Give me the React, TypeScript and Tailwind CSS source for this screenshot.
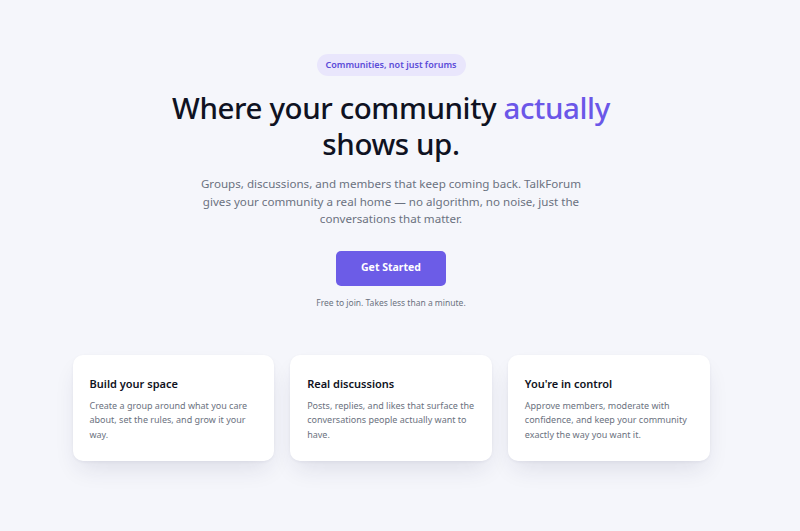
const features = [
  {
    title: "Build your space",
    body: "Create a group around what you care about, set the rules, and grow it your way.",
  },
  {
    title: "Real discussions",
    body: "Posts, replies, and likes that surface the conversations people actually want to have.",
  },
  {
    title: "You're in control",
    body: "Approve members, moderate with confidence, and keep your community exactly the way you want it.",
  },
];

export default function App() {
  return (
    <div className="min-h-screen w-full bg-[#f5f6fb] pr-[18px] font-['Noto_Sans',sans-serif]">
      <section className="flex flex-col items-center pt-[54px] px-4">
        {/* Badge */}
        <span className="rounded-full bg-[#e9e6fc] px-[9px] h-[22px] flex items-center text-[9px] font-semibold text-[#5b4bd8]">
          Communities, not just forums
        </span>

        {/* Heading */}
        <h1 className="mt-[14px] text-center text-[29.5px] leading-[36px] font-medium text-[#0f1222] tracking-[-0.4px]">
          Where your community <span className="text-[#6b57e8]">actually</span>
          <br />
          shows up.
        </h1>

        <p className="mt-[13px] max-w-[384px] text-center text-[11.6px] leading-[17.5px] text-[#6b7280]">
          Groups, discussions, and members that keep coming back. TalkForum gives your community a real home — no
          algorithm, no noise, just the conversations that matter.
        </p>

        <button className="mt-[23px] w-[110px] h-[35px] rounded-[5px] bg-[#6c5ce7] text-white text-[10.5px] font-bold">
          Get Started
        </button>

        <p className="mt-[11px] text-[8.5px] text-[#6b7280]">Free to join. Takes less than a minute.</p>

        {/* Feature cards */}
        <div className="mt-[46px] grid grid-cols-3 gap-4 w-[637px]">
          {features.map((f) => (
            <div
              key={f.title}
              className="h-[106px] rounded-[10px] bg-white px-[17px] pt-[21px] shadow-[0_12px_24px_-6px_rgba(30,35,80,0.12),0_1px_3px_rgba(30,35,80,0.06)]"
            >
              <h3 className="text-[11px] font-semibold text-[#0f1222]">{f.title}</h3>
              <p className="mt-[6px] text-[9px] leading-[14.5px] text-[#6b7280]">{f.body}</p>
            </div>
          ))}
        </div>
      </section>
    </div>
  );
}
